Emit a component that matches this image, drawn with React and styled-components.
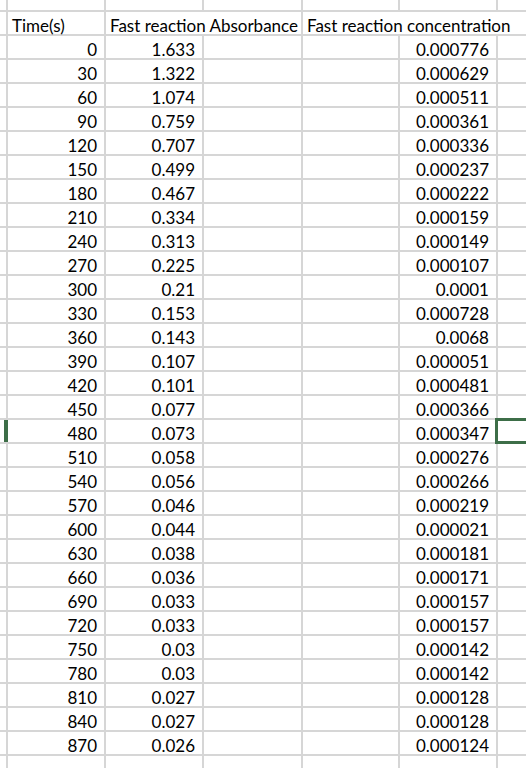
import React from 'react';
import styled, { createGlobalStyle } from 'styled-components';

const GlobalStyle = createGlobalStyle`
  html, body {
    margin: 0;
    padding: 0;
    background: #ffffff;
  }
`;

const Sheet = styled.div`
  display: grid;
  grid-template-columns: 6px 96px 96px 97px 95px 96px 1fr;
  grid-auto-rows: 22px;
  grid-template-rows: 10px;
  gap: 2px;
  background: #d6d6d6;
  width: 526px;
  height: 768px;
  overflow: hidden;
  font-family: Lato, "Open Sans", sans-serif;
  font-size: 17px;
  color: #000;
`;

const Cell = styled.div`
  background: #fff;
  display: flex;
  align-items: flex-end;
  justify-content: ${(p) => (p.$right ? 'flex-end' : 'flex-start')};
  grid-column: span ${(p) => p.$span || 1};
  padding: 0 ${(p) => (p.$right ? '7px' : '0')} 0 ${(p) => (p.$right ? '0' : '4px')};
  line-height: 1;
  white-space: nowrap;
`;

const Stub = styled.div`
  background: ${(p) =>
    p.$active ? 'linear-gradient(to right, #fff 4px, #3d6e48 4px)' : '#fff'};
  margin-right: ${(p) => (p.$active ? '-2px' : '0')};
`;

const Selected = styled.div`
  background: #fff;
  border: 3px solid #3d6e48;
  margin: -2px -4px -2px -3px;
  position: relative;
  z-index: 1;
`;

const rows = [
  [0, '1.633', '0.000776'],
  [30, '1.322', '0.000629'],
  [60, '1.074', '0.000511'],
  [90, '0.759', '0.000361'],
  [120, '0.707', '0.000336'],
  [150, '0.499', '0.000237'],
  [180, '0.467', '0.000222'],
  [210, '0.334', '0.000159'],
  [240, '0.313', '0.000149'],
  [270, '0.225', '0.000107'],
  [300, '0.21', '0.0001'],
  [330, '0.153', '0.000728'],
  [360, '0.143', '0.0068'],
  [390, '0.107', '0.000051'],
  [420, '0.101', '0.000481'],
  [450, '0.077', '0.000366'],
  [480, '0.073', '0.000347'],
  [510, '0.058', '0.000276'],
  [540, '0.056', '0.000266'],
  [570, '0.046', '0.000219'],
  [600, '0.044', '0.000021'],
  [630, '0.038', '0.000181'],
  [660, '0.036', '0.000171'],
  [690, '0.033', '0.000157'],
  [720, '0.033', '0.000157'],
  [750, '0.03', '0.000142'],
  [780, '0.03', '0.000142'],
  [810, '0.027', '0.000128'],
  [840, '0.027', '0.000128'],
  [870, '0.026', '0.000124'],
];

const BlankRow = ({ k }) => (
  <>
    <Stub key={`${k}-s`} />
    {[0, 1, 2, 3, 4, 5].map((i) => (
      <Cell key={`${k}-${i}`} />
    ))}
  </>
);

const App = () => {
  return (
    <>
      <GlobalStyle />
      <Sheet>
        <BlankRow k="top" />

        {/* header text spills over the empty cells to its right */}
        <Stub />
        <Cell>Time(s)</Cell>
        <Cell $span={2}>Fast reaction Absorbance</Cell>
        <Cell $span={3}>Fast reaction concentration</Cell>

        {rows.map(([t, abs, conc]) => {
          const active = t === 480;
          return (
            <React.Fragment key={t}>
              <Stub $active={active} />
              <Cell $right>{t}</Cell>
              <Cell $right>{abs}</Cell>
              <Cell />
              <Cell />
              <Cell $right>{conc}</Cell>
              {active ? <Selected /> : <Cell />}
            </React.Fragment>
          );
        })}

        <BlankRow k="bottom" />
      </Sheet>
    </>
  );
};

export default App;
